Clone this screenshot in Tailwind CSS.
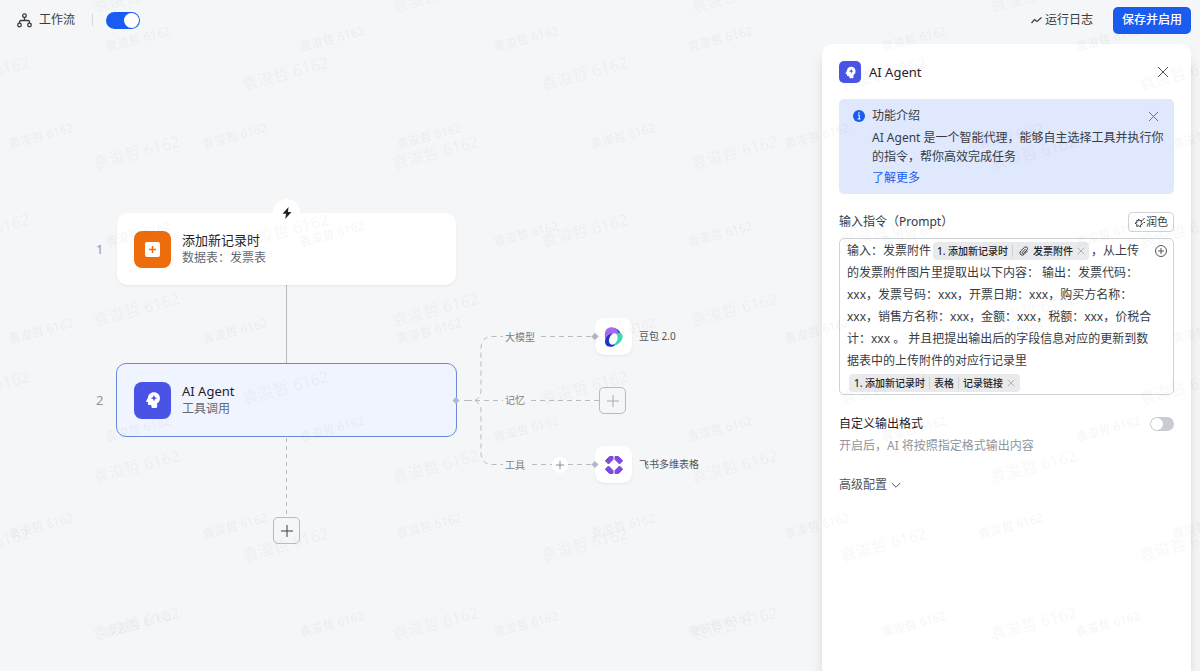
<!DOCTYPE html>
<html lang="zh-CN">
  <head>
    <meta charset="UTF-8" />
    <meta name="viewport" content="width=device-width, initial-scale=1" />
    <title>工作流</title>
    <script src="https://cdn.jsdelivr.net/npm/@tailwindcss/browser@4"></script>
  </head>
  <body
    class="flex min-h-screen flex-col overflow-hidden bg-[#f5f6f7] font-['Noto_Sans','Noto_Sans_CJK_SC',sans-serif] text-xs text-[#373c43]"
  >
    <!-- Shared icons -->
    <svg class="hidden">
      <symbol id="agent" viewBox="0 0 24 24">
        <path
          fill="#fff"
          d="M13.200 1.500C8.800 1.500 5.400 4.800 5.200 9.200L3.100 13c-.5.900-.1 1.600.8 1.700h1.300v2c0 1.400.8 2.100 2.100 2.100h2.500v2.200q0 1.500 1.500 1.500h4.700q1.500 0 1.500-1.500v-4.600c2.400-1.500 3.800-4 3.800-6.900 0-4.600-3.600-8-8.100-8z"
        />
        <path
          fill="#4954e6"
          d="M13.300 5.200l1.300 3 3 1.300-3 1.300-1.300 3-1.300-3-3-1.300 3-1.300z"
        />
      </symbol>
      <symbol id="close" viewBox="0 0 12 12">
        <path d="M1 1l10 10M11 1L1 11" fill="none" stroke="currentColor" />
      </symbol>
      <symbol id="plus" viewBox="0 0 14 14">
        <path d="M7 1v12M1 7h12" fill="none" stroke="currentColor" />
      </symbol>
    </svg>

    <header class="mb-1 flex h-10 items-center justify-between pr-[9px] pl-[17px]">
      <div class="flex items-center">
        <svg class="size-[15px]" viewBox="0 0 15 15" fill="none" stroke="#373c43" stroke-width="1.3">
          <circle cx="7.500" cy="2.700" r="1.800" />
          <circle cx="2.500" cy="12" r="1.800" />
          <circle cx="12.500" cy="12" r="1.800" />
          <path d="M7.500 4.500v3M2.500 10V9q0-1.500 1.500-1.500h7q1.500 0 1.500 1.500v1" />
        </svg>
        <h1 class="ml-[7px] leading-5">工作流</h1>
        <span class="mr-[13px] ml-[17px] h-3 w-px bg-[#d5d7db]"></span>
        <input
          type="checkbox"
          checked
          aria-label="启用工作流"
          class="h-[17px] w-[34px] appearance-none rounded-full bg-[#c4c7cc] p-px before:block before:size-[15px] before:rounded-full before:bg-white checked:bg-[#1a5cf0] checked:before:ml-[17px]"
        />
      </div>
      <div class="flex items-center gap-5">
        <button class="flex items-center gap-[3px] leading-5">
          <svg class="size-[11px]" viewBox="0 0 11 11" fill="none" stroke="#373c43" stroke-width="1.200">
            <path d="M.5 8L3.500 4.500l2.500 2 4.500-4" />
          </svg>
          运行日志
        </button>
        <button class="h-[27px] rounded-[5px] bg-[#1a5cf0] px-[9px] leading-5 font-medium text-white">
          保存并启用
        </button>
      </div>
    </header>

    <main class="flex flex-1">
      <!-- Flow canvas -->
      <section class="relative flex-1">
        <svg class="absolute top-0 left-0 h-[560px] w-[720px]" viewBox="0 44 720 560" fill="none" stroke="#b8bbc2">
          <path d="M286.500 285v79" />
          <path d="M286.500 438v79" stroke-dasharray="4 4" />
          <path d="M464 400.500h8" />
          <g stroke-dasharray="5 4">
            <path d="M475 400.500q6-3 6-11v-41q0-12 12-12h10" />
            <path d="M475 400.500q6 3 6 11v41q0 12 12 12h10" />
            <path d="M475 400.500h28M531 400.500h68" />
            <path d="M541 336.500h52M532 464.500h20M568 464.500h25" />
          </g>
        </svg>

        <span class="absolute top-[195px] left-[96px] text-[13px] leading-5 text-[#8f959e]">1</span>
        <article class="absolute top-[169px] left-[117px] flex h-[72px] w-[339px] items-center gap-[11px] rounded-[10px] bg-white pl-[17px] shadow-sm shadow-black/5">
          <span class="flex size-[37px] items-center justify-center rounded-lg bg-[#ed6d0c]">
            <svg class="size-[15px]" viewBox="0 0 15 15">
              <rect width="15" height="15" rx="2" fill="#fff" />
              <path d="M7.500 4v7M4 7.500h7" stroke="#ed6d0c" stroke-width="1.500" />
            </svg>
          </span>
          <div>
            <h2 class="text-[13px] leading-[18px] text-[#1f2329]">添加新记录时</h2>
            <p class="leading-[18px] text-[#646a73]">数据表：发票表</p>
          </div>
        </article>
        <span class="absolute top-[155px] left-[273px] flex size-[27px] items-center justify-center rounded-full bg-white">
          <svg class="size-3" viewBox="0 0 12 12" fill="#1f2329">
            <path d="M7.500 0L1.500 6.700h3.500L4.300 12l6.200-7H7z" />
          </svg>
        </span>

        <span class="absolute top-[346px] left-[96px] text-[13px] leading-5 text-[#8f959e]">2</span>
        <article class="absolute top-[319px] left-[116px] flex h-[74px] w-[341px] items-center gap-[11px] rounded-[10px] border border-[#6b8bd8] bg-[#eff4fe] pl-[17px]">
          <span class="flex size-[37px] items-center justify-center rounded-lg bg-[#4954e6]">
            <svg class="size-[18px]"><use href="#agent" /></svg>
          </span>
          <div>
            <h2 class="text-[13px] leading-[18px] text-[#1f2329]">AI Agent</h2>
            <p class="leading-[18px] text-[#646a73]">工具调用</p>
          </div>
        </article>
        <button aria-label="添加节点" class="absolute top-[473px] left-[273px] flex size-[27px] items-center justify-center rounded-[5px] border border-[#b8bbbf] text-[#373c43]">
          <svg class="size-[14px]"><use href="#plus" /></svg>
        </button>

        <!-- Agent branches -->
        <span class="absolute top-[283px] left-[505px] text-[10px] leading-5 text-[#7a7f87]">大模型</span>
        <span class="absolute top-[346px] left-[505px] text-[10px] leading-5 text-[#7a7f87]">记忆</span>
        <span class="absolute top-[411px] left-[505px] text-[10px] leading-5 text-[#7a7f87]">工具</span>
        <button aria-label="添加工具" class="absolute top-[413px] left-[552px] flex size-4 items-center justify-center rounded-full bg-white text-[#646a73]">
          <svg class="size-[10px]"><use href="#plus" /></svg>
        </button>

        <div class="absolute top-[274px] left-[595px] flex items-center gap-[7px] text-[10px] text-[#50555c]">
          <span class="flex size-[37px] items-center justify-center rounded-[9px] bg-white shadow-sm shadow-black/5">
            <svg class="size-5" viewBox="0 0 20 20">
              <path d="M10.500 1.200c3.500.8 5.500 3 6.300 6l-4 2z" fill="#1d35c8" />
              <path d="M1.200 12C0 5.500 1.500.300 7.500.200c4.500 0 6.500 3 7.300 7.300L7 10z" fill="#a66af2" />
              <path d="M13.500 5.800c5.500-.3 6.500 4.200 3.500 8.200-2.500 3.200-5.500 5-8.500 5.300l2-6z" fill="#3bd8b2" />
              <path d="M7.500 6.500C2 8.500.300 13 1.300 16.500c1 3.800 5.700 3.900 8.700 2.400l1-5z" fill="#1d35c8" />
              <ellipse cx="9.300" cy="12" rx="4" ry="6" fill="#fff" transform="rotate(22 9.300 12)" />
            </svg>
          </span>
          豆包 2.0
        </div>
        <button aria-label="添加记忆" class="absolute top-[343px] left-[599px] flex size-[27px] items-center justify-center rounded-[5px] border border-[#b8bbbf] text-[#a6aab0]">
          <svg class="size-[14px]"><use href="#plus" /></svg>
        </button>
        <div class="absolute top-[402px] left-[595px] flex items-center gap-[7px] text-[10px] text-[#50555c]">
          <span class="flex size-[37px] items-center justify-center rounded-[9px] bg-white shadow-sm shadow-black/5">
            <svg class="size-5" viewBox="0 0 20 20" fill="#7f4bdc" stroke="#7f4bdc" stroke-linejoin="round">
              <path d="M5.500 1.500H9V4.500L4.500 9 1.500 6V5.500z" />
              <path d="M11 1.500h3.500l4 4V6l-3 3L11 4.500z" />
              <path d="M18.500 14v.5l-4 4H11v-3L15.500 11z" />
              <path d="M9 18.500H5.500l-4-4V14l3-3L9 15.500z" />
            </svg>
          </span>
          飞书多维表格
        </div>

        <!-- Connection ports -->
        <svg class="absolute top-0 left-0 h-[560px] w-[720px]" viewBox="0 44 720 560" fill="#b3b6c6">
          <path d="M456 397l3.500 3.500-3.500 3.500-3.500-3.500z" />
          <path d="M595 333l3.500 3.500-3.500 3.500-3.500-3.500z" />
          <path d="M595 461l3.500 3.500-3.500 3.500-3.500-3.500z" />
        </svg>
      </section>

      <!-- Settings panel -->
      <aside class="mr-[9px] w-[369px] rounded-t-[10px] bg-white px-[17px] pt-4 shadow-lg shadow-black/15">
        <div class="flex items-center">
          <span class="flex size-[22px] items-center justify-center rounded-[5px] bg-[#4954e6]">
            <svg class="size-[13px]"><use href="#agent" /></svg>
          </span>
          <h2 class="ml-2 flex-1 text-[13px] leading-6 text-[#1f2329]">AI Agent</h2>
          <button aria-label="关闭" class="mr-[5px] text-[#50555c]">
            <svg class="size-3"><use href="#close" /></svg>
          </button>
        </div>

        <div class="mt-[15px] flex rounded-[5px] bg-[#e0e8fe] pt-[7px] pr-[15px] pb-[6px] pl-[14px]">
          <svg class="mt-[4px] size-3 shrink-0" viewBox="0 0 12 12">
            <circle cx="6" cy="6" r="6" fill="#1a5cf0" />
            <path d="M5 5h1.300v4M4.500 9h3" fill="none" stroke="#fff" />
            <circle cx="6" cy="3" r=".8" fill="#fff" />
          </svg>
          <div class="ml-[7px] min-w-0 flex-1 whitespace-nowrap">
            <div class="flex items-center justify-between leading-5">
              <h3>功能介绍</h3>
              <button aria-label="关闭介绍" class="text-[#646a73]">
                <svg class="size-[11px]"><use href="#close" /></svg>
              </button>
            </div>
            <p class="mt-[2px] leading-[19px]">
              AI Agent 是一个智能代理，能够自主选择工具并执行你<br />的指令，帮你高效完成任务
            </p>
            <a href="#" class="mt-[2px] block leading-5 text-[#1a5cf0]">了解更多</a>
          </div>
        </div>

        <div class="mt-[17px] flex items-center justify-between">
          <label id="prompt-label" class="leading-[22px]">输入指令（Prompt）</label>
          <button class="flex h-5 items-center gap-px rounded border border-[#d0d3d6] px-[5px] text-[11px]">
            <svg class="size-[11px]" viewBox="0 0 11 11" fill="none" stroke="#373c43">
              <path d="M4.500 2l1.200 1.700 2-.3-.6 2L8.500 7l-1.800.8L6.500 10 4.700 8.700 2.800 9.500l.1-2.100L1 6.200l2-.8-.2-2.100 1.500.5zM8.500 3.500L10.500 1M9.500 5.500H11" />
            </svg>
            润色
          </button>
        </div>
        <div class="mt-[5px] flex justify-between rounded-[5px] border border-[#d0d3d6] pt-px pr-[6px] pl-[7px]">
          <div
            role="textbox"
            aria-multiline="true"
            aria-labelledby="prompt-label"
            contenteditable="true"
            class="min-w-0 flex-1 leading-[22px] whitespace-nowrap"
          >
            <div class="flex items-center">
              输入：发票附件
              <span contenteditable="false" class="mx-[2px] flex h-[18px] items-center rounded bg-[#e9eaeb] px-1 text-[10px] font-medium text-[#1f2329]">
                1. 添加新记录时
                <span class="mx-1 h-3 w-px bg-[#cfd1d4]"></span>
                <svg class="mr-1 ml-[2px] size-[10px]" viewBox="0 0 10 10" fill="none" stroke="#373c43">
                  <path d="M6.500 3L3.300 6.300q-.4.900.3 1.200.600.200 1-.200L8 4q1.200-1.600 0-2.700-1.300-1-2.700.2L1.700 5q-1.600 1.900-.2 3.500Q3.200 10 5 8.500l3.500-3.500" />
                </svg>
                发票附件
                <svg class="ml-1 size-2 text-[#8f959e]"><use href="#close" /></svg>
              </span>
              ，从上传
            </div>
            <div>的发票附件图片里提取出以下内容：&nbsp;输出：发票代码：</div>
            <div>xxx，发票号码：xxx，开票日期：xxx，购买方名称：</div>
            <div>xxx，销售方名称：xxx，金额：xxx，税额：xxx，价税合</div>
            <div>计：xxx 。&nbsp;并且把提出输出后的字段信息对应的更新到数</div>
            <div>据表中的上传附件的对应行记录里</div>
            <div class="flex h-[22px] items-center">
              <span contenteditable="false" class="mx-[2px] flex h-[18px] items-center rounded bg-[#e9eaeb] px-[5px] text-[10px] font-medium text-[#1f2329]">
                1. 添加新记录时
                <span class="mx-1 h-3 w-px bg-[#cfd1d4]"></span>
                表格
                <span class="mx-1 h-3 w-px bg-[#cfd1d4]"></span>
                记录链接
                <svg class="ml-1 size-2 text-[#8f959e]"><use href="#close" /></svg>
              </span>
            </div>
          </div>
          <button aria-label="插入变量" class="mt-[5px] self-start">
            <svg class="size-3" viewBox="0 0 12 12" fill="none" stroke="#50555c">
              <circle cx="6" cy="6" r="5.500" />
              <path d="M6 3v6M3 6h6" />
            </svg>
          </button>
        </div>

        <div class="mt-[18px] flex items-center justify-between">
          <label for="custom-format" class="leading-[22px] text-[#1f2329]">自定义输出格式</label>
          <input
            id="custom-format"
            type="checkbox"
            class="h-[14px] w-6 appearance-none rounded-full bg-[#c9ccd0] p-px before:block before:size-3 before:rounded-full before:bg-white checked:bg-[#1a5cf0] checked:before:ml-[10px]"
          />
        </div>
        <p class="leading-[22px] text-[#8f959e]">开启后，AI 将按照指定格式输出内容</p>
        <button class="mt-[17px] flex items-center gap-1 leading-[22px] text-[#50555c]">
          高级配置
          <svg class="size-[10px]" viewBox="0 0 10 10" fill="none" stroke="currentColor">
            <path d="M.8 3L5 7.200 9.200 3" />
          </svg>
        </button>
      </aside>
    </main>

    <!-- Watermark -->
    <svg class="pointer-events-none fixed inset-0 size-full" aria-hidden="true">
      <defs>
        <pattern id="mark-small" x="89" y="-10" width="194" height="195" patternUnits="userSpaceOnUse">
          <g class="text-xs" fill="#1f2329" fill-opacity=".05" text-anchor="middle">
            <text transform="translate(50 53) rotate(-15)">袁浚哲 6162</text>
            <text transform="translate(147 150) rotate(-15)">袁浚哲 6162</text>
          </g>
        </pattern>
        <pattern id="mark-large" x="211" y="33" width="299" height="157" patternUnits="userSpaceOnUse">
          <g class="text-base" fill="#1f2329" fill-opacity=".035" text-anchor="middle">
            <text transform="translate(76 46) rotate(-15)">袁浚哲 6162</text>
            <text transform="translate(226 125) rotate(-15)">袁浚哲 6162</text>
          </g>
        </pattern>
      </defs>
      <rect width="100%" height="100%" fill="url(#mark-small)" />
      <rect width="100%" height="100%" fill="url(#mark-large)" />
    </svg>
  </body>
</html>
